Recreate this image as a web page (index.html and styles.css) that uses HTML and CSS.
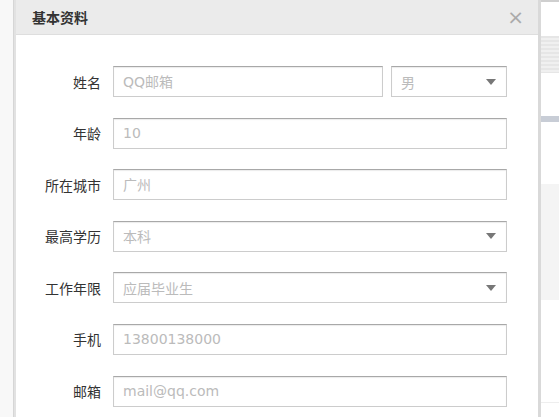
FILE: index.html
```
<!DOCTYPE html>
<html lang="zh-CN">
<head>
    <meta charset="UTF-8">
    <meta name="viewport" content="width=device-width, initial-scale=1.0">
    <title>基本资料</title>
    <link rel="stylesheet" href="styles.css">
</head>
<body>
    <div class="page">
        <div class="side-left"></div>
        <div class="dialog">
            <div class="dialog-head">
                <span class="dialog-title">基本资料</span>
                <span class="close">&times;</span>
            </div>
            <form class="dialog-body">
                <div class="row">
                    <label class="label">姓名</label>
                    <input class="field name" type="text" placeholder="QQ邮箱">
                    <div class="select sex">
                        <span>男</span>
                        <svg class="arrow" width="10" height="6" viewBox="0 0 10 6"><path d="M0 0h10L5 6z" fill="#777"/></svg>
                    </div>
                </div>
                <div class="row">
                    <label class="label">年龄</label>
                    <input class="field" type="text" placeholder="10">
                </div>
                <div class="row">
                    <label class="label">所在城市</label>
                    <input class="field" type="text" placeholder="广州">
                </div>
                <div class="row">
                    <label class="label">最高学历</label>
                    <div class="select">
                        <span>本科</span>
                        <svg class="arrow" width="10" height="6" viewBox="0 0 10 6"><path d="M0 0h10L5 6z" fill="#777"/></svg>
                    </div>
                </div>
                <div class="row">
                    <label class="label">工作年限</label>
                    <div class="select">
                        <span>应届毕业生</span>
                        <svg class="arrow" width="10" height="6" viewBox="0 0 10 6"><path d="M0 0h10L5 6z" fill="#777"/></svg>
                    </div>
                </div>
                <div class="row">
                    <label class="label">手机</label>
                    <input class="field" type="text" placeholder="13800138000">
                </div>
                <div class="row">
                    <label class="label">邮箱</label>
                    <input class="field" type="text" placeholder="mail@qq.com">
                </div>
            </form>
        </div>
        <div class="side-right">
            <div class="sr-top"></div>
            <div class="sr-stripes"></div>
            <div class="sr-bar"></div>
            <div class="sr-gray"></div>
            <div class="sr-line"></div>
        </div>
    </div>
</body>
</html>
```

FILE: styles.css
```
body {
    margin: 0;
    font-family: "DejaVu Sans", "Noto Sans CJK SC", sans-serif;
    font-size: 14px;
    color: #333;
    background-color: #fff;
}
.page {
    display: flex;
    height: 417px;
    overflow: hidden;
}
.side-left {
    width: 13px;
    background-color: #f8f8f8;
    border-right: 1px solid #d6d6d6;
}
.dialog {
    width: 522px;
    background-color: #fff;
    border-left: 2px solid #e2e2e2;
    border-right: 3px solid #d9d9d9;
}
.dialog-head {
    height: 34px;
    background-color: #ebebeb;
    border-bottom: 1px solid #dedede;
    display: flex;
    align-items: center;
    justify-content: space-between;
    padding: 0 14px 0 16px;
}
.dialog-title {
    font-family: "Noto Sans CJK SC", sans-serif;
    font-weight: bold;
    font-size: 14px;
    color: #333;
}
.close {
    font-family: "DejaVu Sans", sans-serif;
    font-size: 20px;
    color: #aaa;
    line-height: 1;
}
.dialog-body {
    padding: 31px 31px 0 0;
    display: flex;
    flex-direction: column;
    gap: 20.6px;
}
.row {
    display: flex;
    align-items: center;
    height: 31px;
}
.label {
    width: 85px;
    margin-right: 12px;
    text-align: right;
    font-family: "Noto Sans CJK SC", sans-serif;
    color: #333;
}
.field, .select {
    flex: 1;
    box-sizing: border-box;
    height: 31px;
    border: 1px solid #ccc;
    border-top-color: #a8a8a8;
    box-shadow: inset 0 1px 1px rgba(0, 0, 0, 0.08);
    padding: 0 9px;
    font-family: "DejaVu Sans", "Noto Sans CJK SC", sans-serif;
    font-size: 14px;
    color: #bbb;
    background: #fff;
    outline: none;
}
.field::placeholder {
    color: #bbb;
}
.field.name {
    flex: 0 0 270px;
}
.select {
    display: flex;
    align-items: center;
    justify-content: space-between;
    padding-right: 10px;
}
.select.sex {
    flex: 0 0 116px;
    margin-left: 8px;
}
.arrow {
    display: block;
}
.side-right {
    flex: 1;
    display: flex;
    flex-direction: column;
    background-color: #fff;
}
.sr-top {
    height: 2px;
    background-color: #cfcfcf;
    margin-bottom: 34px;
}
.sr-stripes {
    height: 37px;
    background: repeating-linear-gradient(#e6e6e6 0, #e6e6e6 2px, #f0f0f0 2px, #f0f0f0 4px);
    margin-bottom: 43px;
}
.sr-bar {
    height: 6px;
    background-color: #c8cdd6;
    margin-bottom: 62px;
}
.sr-gray {
    height: 116px;
    background-color: #f4f4f4;
    margin-bottom: 102px;
}
.sr-line {
    height: 1px;
    background-color: #eee;
}
```
